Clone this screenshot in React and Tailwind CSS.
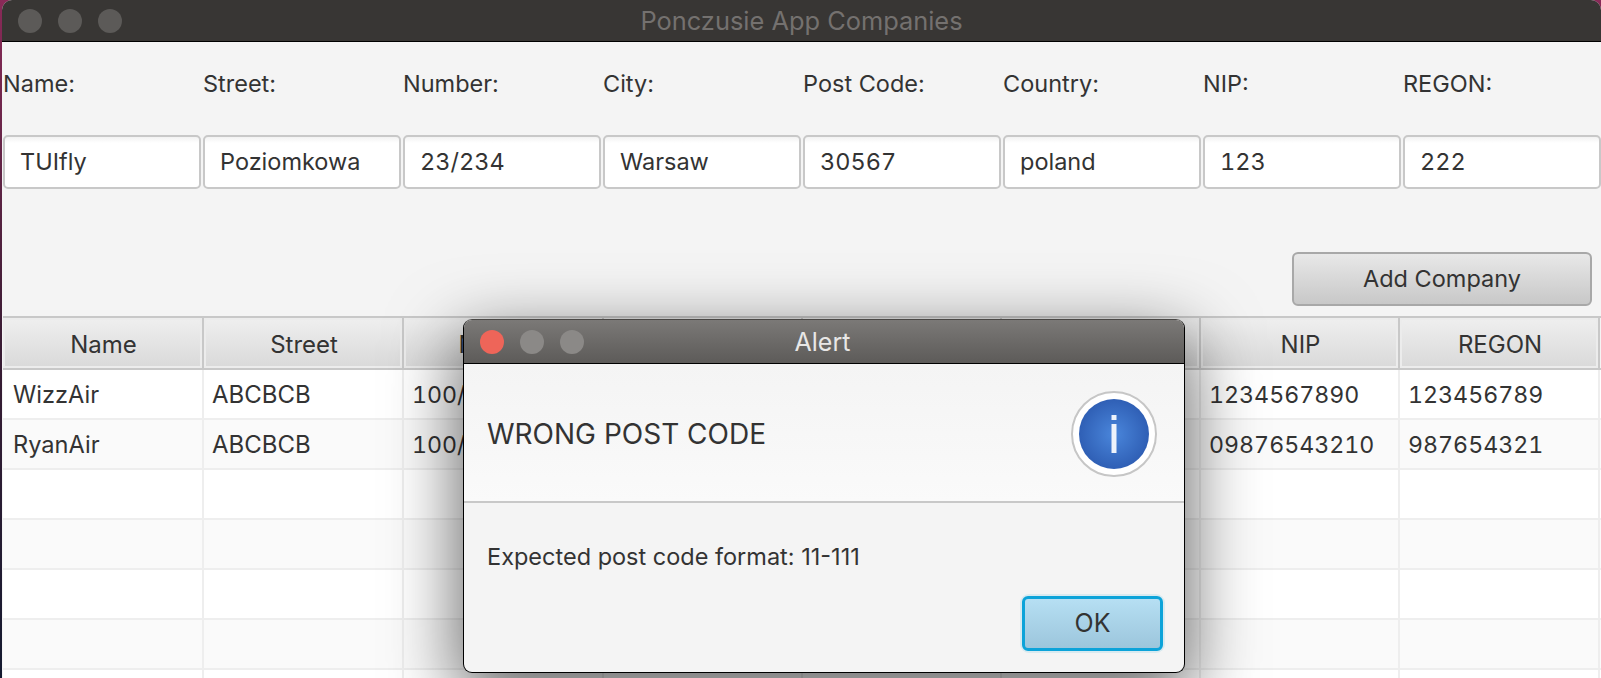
const labels = ['Name:', 'Street:', 'Number:', 'City:', 'Post Code:', 'Country:', 'NIP:', 'REGON:']
const values = ['TUIfly', 'Poziomkowa', '23/234', 'Warsaw', '30567', 'poland', '123', '222']
const headers = ['Name', 'Street', 'Number', 'City', 'Post Code', 'Country', 'NIP', 'REGON']

const rows = [
  ['WizzAir', 'ABCBCB', '100/2', '', '', '', '1234567890', '123456789'],
  ['RyanAir', 'ABCBCB', '100/3', '', '', '', '09876543210', '987654321'],
  ['', '', '', '', '', '', '', ''],
  ['', '', '', '', '', '', '', ''],
  ['', '', '', '', '', '', '', ''],
  ['', '', '', '', '', '', '', ''],
  ['', '', '', '', '', '', '', ''],
]

// left padding and size differ a little per column, as in the screenshot
const cellStyles = [
  'pl-[10px] text-[23.6px]',
  'pl-[8px] text-[24px]',
  'pl-[8px] text-[23.2px]',
  'pl-[8px] text-[23.2px]',
  'pl-[8px] text-[23.2px]',
  'pl-[8px] text-[23.2px]',
  'pl-[8px] text-[23.2px]',
  'pl-[8px] text-[23.2px]',
]

function Dot({ className }) {
  return <span className={`block size-6 rounded-full ${className}`} />
}

function InfoIcon() {
  return (
    <svg width="86" height="86" viewBox="0 0 86 86">
      <defs>
        <radialGradient id="infoFill" cx="50%" cy="50%" r="50%">
          <stop offset="0%" stopColor="#4a86db" />
          <stop offset="100%" stopColor="#2f5fb5" />
        </radialGradient>
      </defs>
      <circle cx="43" cy="43" r="42" fill="#fff" stroke="#c6c6c6" strokeWidth="2" />
      <circle cx="43" cy="43" r="35" fill="url(#infoFill)" />
      <rect x="40.5" y="24" width="5" height="5" fill="#eef3fb" />
      <rect x="40.5" y="33" width="5" height="29" fill="#eef3fb" />
    </svg>
  )
}

function AlertDialog() {
  return (
    <div className="absolute left-[463px] top-[319px] flex h-[354px] w-[722px] flex-col overflow-hidden rounded-[9px] border border-black border-t-[#4a4846] bg-[#f4f4f4] shadow-[0_22px_70px_4px_rgba(0,0,0,0.6)]">
      <div className="relative flex h-[44px] shrink-0 items-center gap-4 border-b border-black bg-gradient-to-b from-[#7b7977] to-[#5d5b59] pl-4">
        <Dot className="bg-[#ee6559]" />
        <Dot className="bg-[#8b8987]" />
        <Dot className="bg-[#8b8987]" />
        <span className="absolute inset-x-0 top-[8px] pr-[3px] text-center text-[25px] leading-7 text-[#e8e7e6]">Alert</span>
      </div>
      <div className="flex h-[139px] shrink-0 items-center justify-between border-b-2 border-[#c8c8c8] bg-gradient-to-b from-[#f4f4f4] to-[#fafafa] pt-[3px] pl-[23px] pr-[27px]">
        <span className="text-[28px] leading-8 text-[#333]">WRONG POST CODE</span>
        <InfoIcon />
      </div>
      <div className="relative flex-1 px-[23px] pt-[40px]">
        <p className="text-[23.5px] leading-7 text-[#333]">Expected post code format: 11-111</p>
        <div className="absolute bottom-[21px] right-[21px] rounded-[7px] shadow-[0_0_0_2px_rgba(14,165,216,0.12)]">
          <button className="flex h-[55px] w-[141px] items-center justify-center rounded-[6px] border-[3px] border-[#0ca3d9] bg-gradient-to-b from-[#b6dff3] to-[#9cc6dc] text-[25px] text-[#333]">OK</button>
        </div>
      </div>
    </div>
  )
}

export default function App() {
  return (
    <div className="relative h-[678px] w-[1601px] overflow-hidden bg-gradient-to-b from-[#8a2a58] via-[#3a1c34] to-[#141a30] font-['Inter',sans-serif]">
      <div className="ml-[2px] flex h-[678px] flex-col overflow-hidden rounded-t-[10px] bg-[#f4f4f4]">
        <div className="relative flex h-[42px] shrink-0 items-center gap-4 border-b border-black bg-[#383634] pl-[16px]">
          <Dot className="bg-[#5c5a58]" />
          <Dot className="bg-[#5c5a58]" />
          <Dot className="bg-[#5c5a58]" />
          <span className="absolute inset-x-0 top-[7px] text-center text-[25.4px] leading-7 text-[#74716f]">Ponczusie App Companies</span>
        </div>

        <div className="ml-px grid grid-cols-[repeat(8,200px)] pt-[28px] text-[23.5px] leading-7 text-[#333]">
          {labels.map((label) => (
            <span key={label}>{label}</span>
          ))}
        </div>

        <div className="ml-px mt-[37px] grid grid-cols-[repeat(8,200px)]">
          {values.map((value) => (
            <div key={value} className="mr-[2px] flex h-[54px] items-center rounded-[5px] border-2 border-[#c8c8c8] bg-gradient-to-b from-[#f2f2f2] from-0% to-white to-[12%] pl-[15px] text-[23.5px] text-[#333] tabular-nums">
              {value}
            </div>
          ))}
        </div>

        <div className="mt-[63px] flex justify-end pr-[9px]">
          <button className="flex h-[54px] w-[300px] items-center justify-center rounded-[6px] border-2 border-[#a8a8a8] bg-gradient-to-b from-[#e8e8e8] to-[#c8c8c8] text-[23.5px] text-[#333]">Add Company</button>
        </div>

        <div className="ml-px mt-[10px] grid grid-cols-[201px_200px_200px_199px_199px_199px_199px_200px] border-y-2 border-[#c8c8c8]">
          {headers.map((header) => (
            <div key={header} className="flex h-[50px] items-center justify-center border-r-2 border-[#c8c8c8] bg-gradient-to-b from-[#efefef] to-[#d9d9d9] pt-[3px] pl-[2px] text-[24px] text-[#333] shadow-[inset_0_0_0_2px_#ececec]">
              {header}
            </div>
          ))}
        </div>

        {rows.map((row, i) => (
          <div key={i} className={`ml-px grid h-[50px] shrink-0 grid-cols-[201px_200px_200px_199px_199px_199px_199px_200px] border-b-2 border-[#eeeeee] ${i % 2 === 0 ? 'bg-white' : 'bg-[#fafafa]'}`}>
            {row.map((cell, j) => (
              <div key={j} className={`flex items-center overflow-hidden border-r-2 border-[#eeeeee] pt-[2px] whitespace-nowrap text-[#333] tabular-nums ${cellStyles[j]}`}>
                {cell}
              </div>
            ))}
          </div>
        ))}
      </div>
      <AlertDialog />
    </div>
  )
}
